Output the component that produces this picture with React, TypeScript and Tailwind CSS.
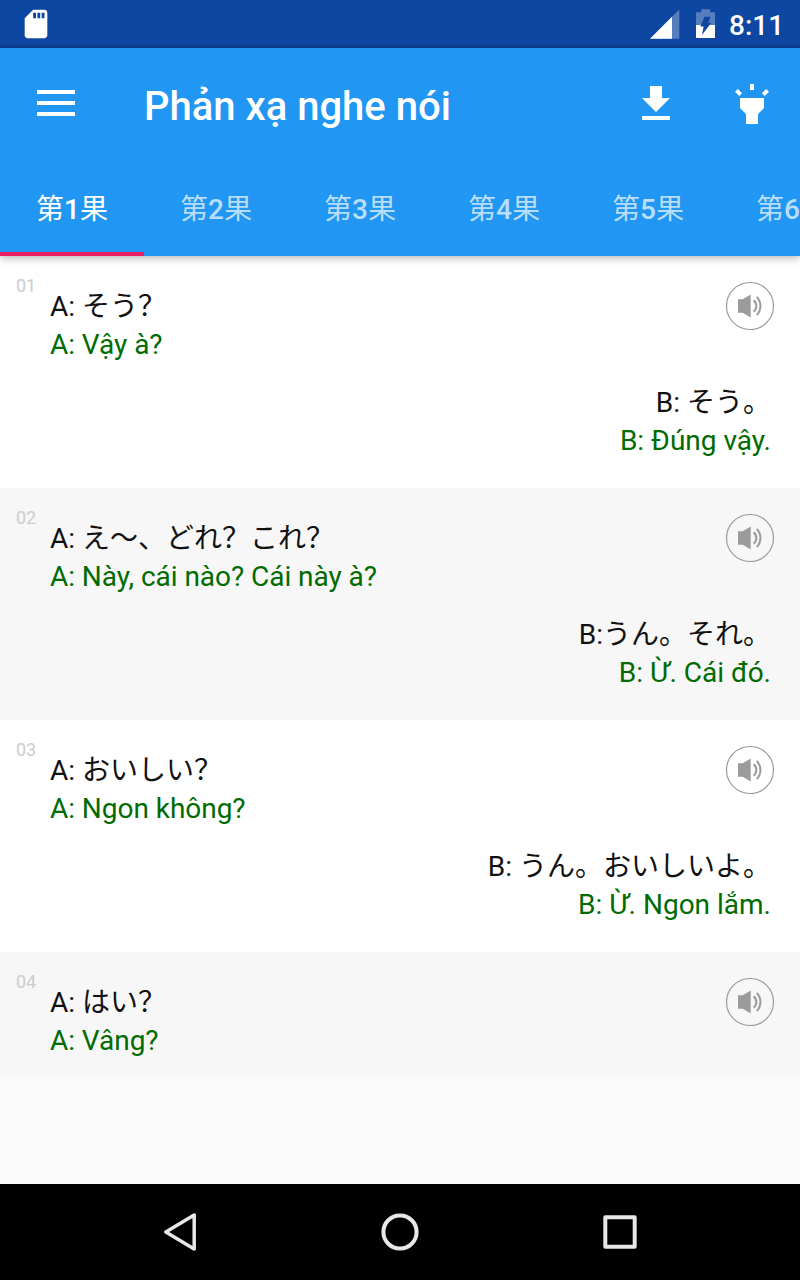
const entries = [
  { no: '01', a: 'A: そう？', av: 'A: Vậy à?', b: 'B: そう。', bv: 'B: Đúng vậy.' },
  { no: '02', a: 'A: え～、どれ？これ？', av: 'A: Này, cái nào? Cái này à?', b: 'B:うん。それ。', bv: 'B: Ừ. Cái đó.' },
  { no: '03', a: 'A: おいしい？', av: 'A: Ngon không?', b: 'B: うん。おいしいよ。', bv: 'B: Ừ. Ngon lắm.' },
  { no: '04', a: 'A: はい？', av: 'A: Vâng?' },
];

const lessons = [1, 2, 3, 4, 5, 6];

function StatusBar() {
  return (
    <div className="flex h-12 shrink-0 items-center bg-linear-to-b from-[#0d47a1] from-90% to-[#0c3f90] pl-[19px] pr-[17px] text-white">
      <svg className="size-[34px]" viewBox="0 0 24 24" fill="currentColor">
        <path d="M18 2h-8L4.02 8 4 20c0 1.1.9 2 2 2h12c1.1 0 2-.9 2-2V4c0-1.1-.9-2-2-2zm-6 6h-2V4h2v4zm3 0h-2V4h2v4zm3 0h-2V4h2v4z" />
      </svg>
      <svg className="ml-auto h-12 w-[34px]" viewBox="648 0 34 48" fill="currentColor">
        <path d="M679.3 9.5V38.7H650z" opacity=".3" />
        <path d="M672 16.8V38.7H650z" />
      </svg>
      <svg className="ml-[11px] h-12 w-6" viewBox="693 0 24 48" fill="currentColor">
        <path d="M696 12.300h5.300V9.300h8.700v3h5V25h-19z" opacity=".3" />
        <path d="M696 25h19v13h-19z" />
        <path d="M704.500 16.700h6l-2.300 6h3L702 35l1.600-8.500h-3.300z" fill="#0d47a1" />
      </svg>
      <span className="ml-3 w-[54px] whitespace-nowrap pt-[3px] text-[28px] font-medium leading-8">8:11</span>
    </div>
  );
}

function SpeakerButton() {
  return (
    <button className="mt-[25px] size-[50px] shrink-0 text-[#9b9b9b]" aria-label="Play">
      <svg className="size-[50px]" viewBox="0 0 50 50" fill="none" stroke="currentColor">
        <circle cx="25" cy="25" r="23.500" strokeWidth="1.200" />
        <path d="M13 18.300h4.700l8-4.900v23l-8-4.700H13z" fill="currentColor" stroke="none" />
        <path d="M28.600 19.400a7 7 0 0 1 0 11.200M31.800 16a13 13 0 0 1 0 18" strokeWidth="2" />
      </svg>
    </button>
  );
}

function Entry({ item, last }: { item: (typeof entries)[number]; last: boolean }) {
  return (
    <article className={`flex shrink-0 pl-4 pr-[25px] odd:bg-white even:bg-[#f7f7f7] ${last ? 'h-[122px]' : 'h-[232px]'}`}>
      <span className="w-[34px] shrink-0 pt-[19px] text-[18px] leading-[22px] text-[#cccccc]">{item.no}</span>
      <div className="min-w-0 flex-1 pt-8 text-[28px] leading-[38px] text-[#111111]">
        <p className="[font-kerning:none]">{item.a}</p>
        <p className="tracking-[-0.04px] text-[#006b00]">{item.av}</p>
        {item.b && (
          <div className="-mr-[46px] mt-5 text-right">
            <p className="[font-kerning:none]">{item.b}</p>
            <p className="text-[#006b00]">{item.bv}</p>
          </div>
        )}
      </div>
      <SpeakerButton />
    </article>
  );
}

export default function App() {
  return (
    <div lang="zh-CN" className="flex h-[1280px] w-[800px] flex-col overflow-hidden bg-[#fafafa] font-['Roboto','Noto_Sans_CJK_SC',sans-serif]">
      <StatusBar />
      <header className="relative z-10 shrink-0 bg-[#2196f3] text-white shadow-[0_2px_8px_rgba(0,0,0,0.3)]">
        <div className="flex h-28 items-center pl-[37px] pr-6">
          <button className="-mt-0.5 flex w-[38px] flex-col gap-[7px]" aria-label="Menu">
            <span className="h-1 w-full bg-white" />
            <span className="h-1 w-full bg-white" />
            <span className="h-1 w-full bg-white" />
          </button>
          <h1 className="ml-[69px] pt-[5px] text-[40px] font-medium leading-[48px]">Phản xạ nghe nói</h1>
          <svg className="ml-auto size-12" viewBox="0 0 24 24" fill="currentColor">
            <path d="M19 9h-4V3H9v6H5l7 7 7-7zM5 18v2h14v-2H5z" />
          </svg>
          <svg className="ml-12 size-12" viewBox="0 0 24 24" fill="currentColor">
            <path d="M6 14l3 3v5h6v-5l3-3V9H6zm5-12h2v3h-2zM3.500 5.875L4.914 4.460l2.120 2.122L5.620 7.997zm13.460.710l2.123-2.120 1.414 1.414L18.375 8z" />
          </svg>
        </div>
        <nav className="flex h-24 overflow-hidden">
          {lessons.map((n, i) => (
            <div
              key={n}
              className={`flex w-36 shrink-0 justify-center border-b-4 pt-[31px] text-[28px] leading-[38px] ${
                i === 0 ? 'border-[#e91e63]' : 'border-transparent text-white/70'
              }`}
            >
              <p>
                第<span className="font-medium">{n}</span>果
              </p>
            </div>
          ))}
        </nav>
      </header>
      <main className="flex min-h-0 flex-1 flex-col">
        {entries.map((item, i) => (
          <Entry key={item.no} item={item} last={i === entries.length - 1} />
        ))}
      </main>
      <footer className="flex h-24 shrink-0 items-center justify-center gap-[172px] bg-black text-[#e8e8e8]">
        <svg className="size-12" viewBox="0 0 48 48" fill="none" stroke="currentColor" strokeWidth="3.500" strokeLinejoin="round">
          <path d="M9.800 24 38.200 7V41z" />
        </svg>
        <svg className="size-12" viewBox="0 0 48 48" fill="none" stroke="currentColor" strokeWidth="4">
          <circle cx="24" cy="24" r="16.600" />
        </svg>
        <svg className="size-12" viewBox="0 0 48 48" fill="none" stroke="currentColor" strokeWidth="4" strokeLinejoin="round">
          <path d="M9.300 9.300h29.400v29.400H9.300z" />
        </svg>
      </footer>
    </div>
  );
}
